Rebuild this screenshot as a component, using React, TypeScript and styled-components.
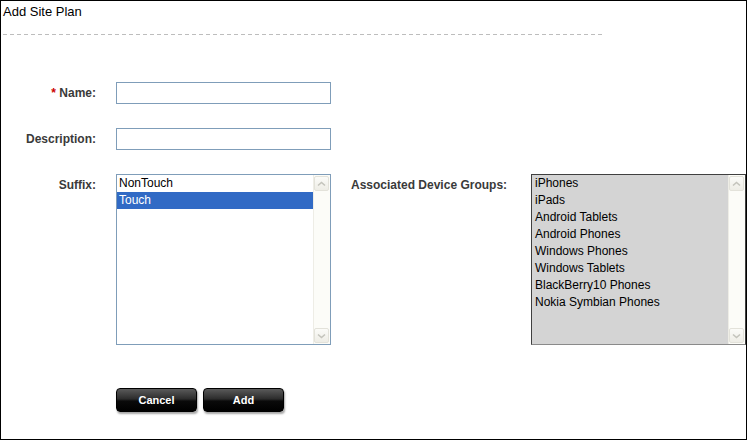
import * as React from "react"
import styled, { createGlobalStyle } from "styled-components"

const GlobalStyle = createGlobalStyle`
    html, body {
        margin: 0;
        padding: 0;
        background: #fff;
    }
    body {
        font-family: "Liberation Sans", Arial, sans-serif;
    }
`

const suffixes = ["NonTouch", "Touch"]
const deviceGroups = [
    "iPhones",
    "iPads",
    "Android Tablets",
    "Android Phones",
    "Windows Phones",
    "Windows Tablets",
    "BlackBerry10 Phones",
    "Nokia Symbian Phones",
]

const Chevron: React.FC<{ down?: boolean }> = ({ down }) => (
    <svg width="9" height="6" viewBox="0 0 9 6">
        <path
            d={down ? "M1 1.5 L4.5 4.5 L8 1.5" : "M1 4.5 L4.5 1.5 L8 4.5"}
            fill="none"
            stroke="#c4c4bc"
            strokeWidth="1.6"
        />
    </svg>
)

const ScrollTrack: React.FC = () => (
    <Scrollbar>
        <ScrollButton>
            <Chevron />
        </ScrollButton>
        <ScrollButton>
            <Chevron down />
        </ScrollButton>
    </Scrollbar>
)

export default function App() {
    const [selected, setSelected] = React.useState("Touch")
    return (
        <>
            <GlobalStyle />
            <Frame>
                <Title>Add Site Plan</Title>
                <Divider />
                <Form>
                    <FieldRow>
                        <Label>
                            <Required>*</Required> Name:
                        </Label>
                        <TextInput />
                    </FieldRow>
                    <FieldRow>
                        <Label>Description:</Label>
                        <TextInput />
                    </FieldRow>
                    <FieldRow $top>
                        <Label $top>Suffix:</Label>
                        <ListBox>
                            <Items>
                                {suffixes.map(s => (
                                    <ListItem key={s} $selected={s === selected} onClick={() => setSelected(s)}>
                                        {s}
                                    </ListItem>
                                ))}
                            </Items>
                            <ScrollTrack />
                        </ListBox>
                        <SideLabel>Associated Device Groups:</SideLabel>
                        <ListBox $disabled>
                            <Items>
                                {deviceGroups.map(g => (
                                    <ListItem key={g} $indent={3}>
                                        {g}
                                    </ListItem>
                                ))}
                            </Items>
                            <ScrollTrack />
                        </ListBox>
                    </FieldRow>
                    <ButtonRow>
                        <ActionButton>Cancel</ActionButton>
                        <ActionButton>Add</ActionButton>
                    </ButtonRow>
                </Form>
            </Frame>
        </>
    )
}

const Frame = styled.div`
    width: 747px;
    height: 440px;
    box-sizing: border-box;
    border: 1px solid #000;
    display: flex;
    flex-direction: column;
`

const Title = styled.div`
    margin: 3px 0 0 2px;
    font-size: 13px;
    line-height: 16px;
    color: #000;
`

const Divider = styled.div`
    margin: 14px 0 0 2px;
    width: 601px;
    height: 1px;
    background-image: linear-gradient(to right, #bdbdbd 0 4px, transparent 4px 7px);
    background-size: 7px 1px;
`

const Form = styled.div`
    display: flex;
    flex-direction: column;
    gap: 24px;
    padding-top: 47px;
`

const FieldRow = styled.div<{ $top?: boolean }>`
    display: flex;
    align-items: ${p => (p.$top ? "flex-start" : "center")};
`

const Label = styled.div<{ $top?: boolean }>`
    width: 95px;
    margin-right: 20px;
    padding-top: ${p => (p.$top ? "3px" : "0")};
    text-align: right;
    font-size: 12px;
    line-height: 16px;
    font-weight: bold;
    color: #3a3a3a;
`

const SideLabel = styled(Label)`
    width: auto;
    margin: 0;
    padding: 3px 0 0 20px;
    flex: 0 0 200px;
    text-align: left;
    box-sizing: border-box;
`

const Required = styled.span`
    color: #cc0000;
`

const TextInput = styled.input`
    width: 215px;
    height: 22px;
    box-sizing: border-box;
    border: 1px solid #7f9db9;
    padding: 0 3px;
    font-family: "Liberation Sans", Arial, sans-serif;
    font-size: 12px;
    outline: none;
`

const ListBox = styled.div<{ $disabled?: boolean }>`
    width: 215px;
    height: 171px;
    box-sizing: border-box;
    display: flex;
    background: ${p => (p.$disabled ? "#d4d4d4" : "#fff")};
    border: 1px solid ${p => (p.$disabled ? "#404040" : "#7f9db9")};
    border-bottom-color: ${p => (p.$disabled ? "#8a8a8a" : "#7f9db9")};
`

const Items = styled.div`
    flex: 1;
    display: flex;
    flex-direction: column;
`

const ListItem = styled.div<{ $selected?: boolean; $indent?: number }>`
    height: 17px;
    line-height: 17px;
    padding-left: ${p => p.$indent ?? 2}px;
    font-size: 12px;
    color: ${p => (p.$selected ? "#fff" : "#000")};
    background: ${p => (p.$selected ? "#316ac5" : "transparent")};
    cursor: default;
`

const Scrollbar = styled.div`
    width: 17px;
    box-sizing: border-box;
    display: flex;
    flex-direction: column;
    justify-content: space-between;
    background: #fcfcf8;
    border-left: 1px solid #eeede6;
    padding: 1px 0 1px 0;
`

const ScrollButton = styled.div`
    width: 15px;
    height: 15px;
    box-sizing: border-box;
    border: 1px solid #e3e2da;
    border-radius: 2px;
    background: linear-gradient(#fbfbf8, #eeede6);
    display: flex;
    align-items: center;
    justify-content: center;
`

const ButtonRow = styled.div`
    display: flex;
    gap: 6px;
    margin: 19px 0 0 115px;
`

const ActionButton = styled.button`
    width: 81px;
    height: 24px;
    border: 1px solid #000;
    border-radius: 4px;
    background: linear-gradient(#5a5a5a 0%, #2c2c2c 45%, #0a0a0a 55%, #000 100%);
    box-shadow: 1px 2px 2px rgba(0, 0, 0, 0.35);
    color: #fff;
    font-family: "Liberation Sans", Arial, sans-serif;
    font-size: 11px;
    font-weight: bold;
    cursor: pointer;
    padding: 0;
`
